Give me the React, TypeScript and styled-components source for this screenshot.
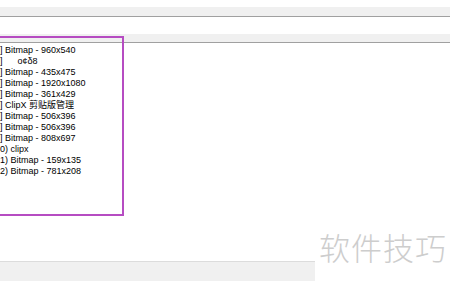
import styled, { createGlobalStyle } from 'styled-components'

const GlobalStyle = createGlobalStyle`
  html, body {
    margin: 0;
    padding: 0;
    background: #ffffff;
  }
  #root {
    width: 450px;
    height: 281px;
    overflow: hidden;
  }
`

const Page = styled.div`
  position: relative;
  width: 450px;
  height: 281px;
  display: flex;
  flex-direction: column;
  background: #ffffff;
  font-family: 'Liberation Sans', 'Noto Sans CJK SC', sans-serif;
  overflow: hidden;
`

const TopStrip = styled.div`
  height: 7px;
  background: #ffffff;
`

const Band = styled.div<{ $top: number }>`
  height: ${(p) => p.$top}px;
  background: #f0f0f0;
  border-bottom: 1px solid #a0a0a0;
`

const Gap = styled.div`
  height: 17px;
  background: #ffffff;
`

const List = styled.ul`
  flex: 1;
  margin: 0;
  padding: 2px 0 0 0;
  list-style: none;
`

const Row = styled.li`
  height: 11px;
  line-height: 11px;
  font-size: 9px;
  color: #000000;
  white-space: pre;
`

const Footer = styled.div`
  height: 20px;
  display: flex;
`

const StatusBar = styled.div`
  width: 315px;
  background: #f0f0f0;
  border-top: 1px solid #dcdcdc;
`

const Highlight = styled.div`
  position: absolute;
  left: -4px;
  top: 36px;
  width: 124px;
  height: 176px;
  border: 2px solid #b64cc2;
  pointer-events: none;
`

const Watermark = styled.div`
  position: absolute;
  left: 319px;
  top: 224px;
  font-family: 'Noto Sans CJK SC', sans-serif;
  font-weight: 300;
  font-size: 31px;
  letter-spacing: 1px;
  color: #cdcdcd;
`

const rows = [
  '] Bitmap - 960x540',
  ']      ο¢δ8',
  '] Bitmap - 435x475',
  '] Bitmap - 1920x1080',
  '] Bitmap - 361x429',
  '] ClipX 剪贴版管理',
  '] Bitmap - 506x396',
  '] Bitmap - 506x396',
  '] Bitmap - 808x697',
  '0) clipx',
  '1) Bitmap - 159x135',
  '2) Bitmap - 781x208'
]

export default function App() {
  return (
    <Page>
      <GlobalStyle />
      <TopStrip />
      <Band $top={9} />
      <Gap />
      <Band $top={8} />
      <List>
        {rows.map((r, i) => (
          <Row key={i}>{r}</Row>
        ))}
      </List>
      <Footer>
        <StatusBar />
      </Footer>
      <Highlight />
      <Watermark>软件技巧</Watermark>
    </Page>
  )
}
